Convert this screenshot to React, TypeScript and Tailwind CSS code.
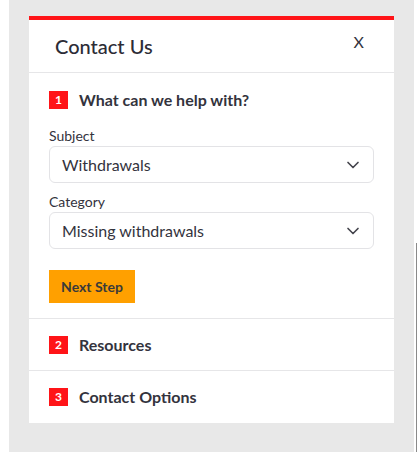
import { ChevronDown } from 'lucide-react';

const font = { fontFamily: 'Lato, "Noto Sans", sans-serif' };

function Badge({ n }: { n: number }) {
  return (
    <div className="w-[19px] h-[18px] bg-[#ff1418] text-white text-[12px] font-bold flex items-center justify-center leading-none">
      {n}
    </div>
  );
}

function Select({ value }: { value: string }) {
  return (
    <div className="h-[37px] w-[325px] border border-[#e3e3e6] rounded-[6px] flex items-center justify-between pl-[12px] pr-[10px] text-[16px] text-[#33333d]">
      <span>{value}</span>
      <ChevronDown size={20} strokeWidth={2} className="text-[#44444c]" />
    </div>
  );
}

export default function App() {
  return (
    <div className="w-[417px] h-[452px] flex bg-white overflow-hidden" style={font}>
      <div className="w-[9px]" />
      <div className="w-[405px] h-full bg-[#e8e8e8] pl-[20px] pt-[16px]">
        <div className="w-[365px] bg-white border-t-4 border-[#ff1418] text-[#33333d]">
          <div className="h-[53px] border-b border-[#e6e6e8] flex items-start justify-between pl-[26px] pr-[30px]">
            <h2 className="text-[20px] font-medium mt-[12px] leading-[28px] text-[#2c2c36]">Contact Us</h2>
            <button className="text-[16px] mt-[12px] leading-[20px]">X</button>
          </div>

          <div className="px-[20px] pt-[18px] pb-[15px] border-b border-[#e6e6e8]">
            <div className="flex items-center gap-[11px] h-[18px] mb-[17px]">
              <Badge n={1} />
              <span className="text-[16px] font-bold">What can we help with?</span>
            </div>
            <div className="text-[14px] leading-[20px]">Subject</div>
            <Select value="Withdrawals" />
            <div className="text-[14px] leading-[20px] mt-[9px]">Category</div>
            <Select value="Missing withdrawals" />
            <button className="mt-[21px] w-[86px] h-[33px] bg-[#ffa000] text-[14px] font-bold text-[#3a3a3a]">
              Next Step
            </button>
          </div>

          <div className="h-[52px] px-[20px] flex items-center gap-[11px] border-b border-[#e6e6e8]">
            <Badge n={2} />
            <span className="text-[16px] font-bold">Resources</span>
          </div>
          <div className="h-[52px] px-[20px] flex items-center gap-[11px]">
            <Badge n={3} />
            <span className="text-[16px] font-bold">Contact Options</span>
          </div>
        </div>
      </div>
      <div className="w-[3px] flex flex-col pt-[243px]">
        <div className="ml-[2px] w-px flex-1 bg-[#8a8a8a]" />
      </div>
    </div>
  );
}
